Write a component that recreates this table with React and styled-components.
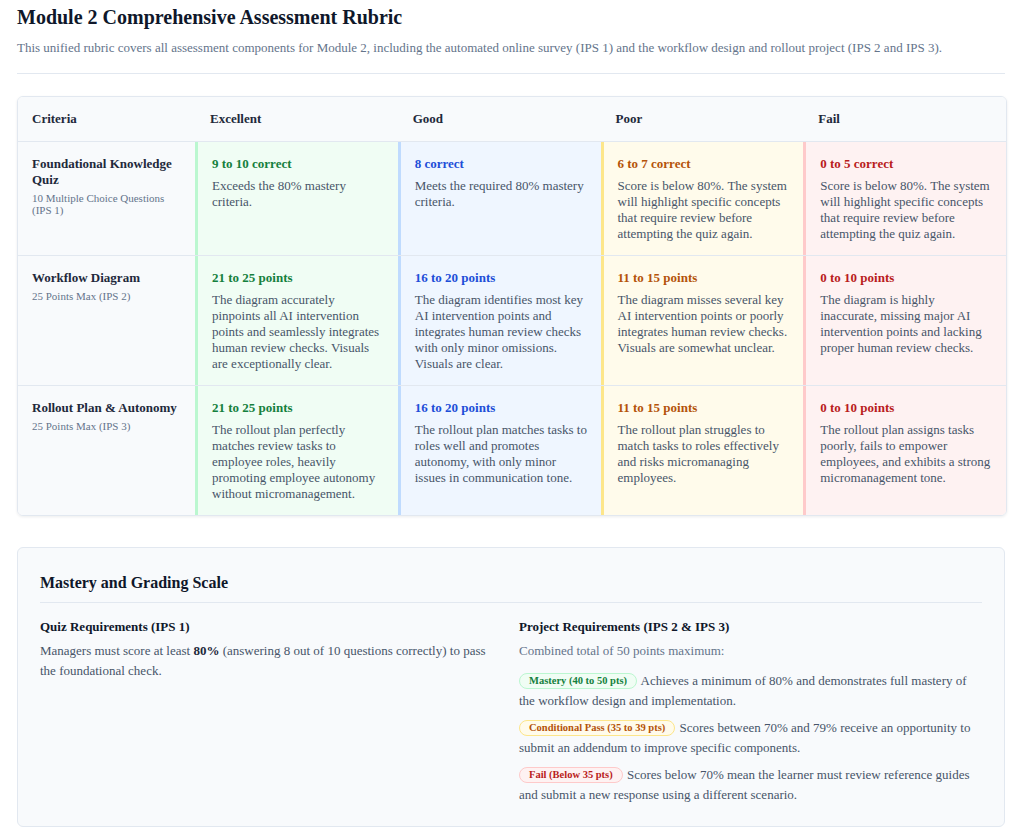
import React from "react";
import styled, { createGlobalStyle } from "styled-components";

const GlobalStyle = createGlobalStyle`
  body {
    margin: 0;
    background: #ffffff;
    font-family: "Liberation Serif", "Times New Roman", serif;
    color: #1e293b;
  }
`;

const tones = {
  green: { bg: "#f0fdf4", border: "#bbf7d0", text: "#15803d" },
  blue: { bg: "#eff6ff", border: "#bfdbfe", text: "#1d4ed8" },
  amber: { bg: "#fffbeb", border: "#fde68a", text: "#b45309" },
  red: { bg: "#fef2f2", border: "#fecaca", text: "#b91c1c" },
};

const Page = styled.div`
  padding: 4px 17px 14px;
`;

const Title = styled.h1`
  margin: 0;
  font-size: 20px;
  line-height: 26px;
  font-weight: 700;
  color: #0f172a;
`;

const Intro = styled.p`
  margin: 9px 2px 0 0;
  font-size: 13px;
  line-height: 18px;
  color: #64748b;
  padding-bottom: 16px;
  border-bottom: 1px solid #e2e8f0;
`;

const TableCard = styled.div`
  margin-top: 22px;
  border: 1px solid #e2e8f0;
  border-radius: 6px;
  overflow: hidden;
  box-shadow: 0 1px 3px rgba(15, 23, 42, 0.08);
`;

const Row = styled.div`
  display: grid;
  grid-template-columns: 177px repeat(4, 1fr);
  border-top: ${({ $head }) => ($head ? "none" : "1px solid #e2e8f0")};
  background: ${({ $head }) => ($head ? "#f8fafc" : "transparent")};
`;

const HeadCell = styled.div`
  padding: 14px 14px 14px 15px;
  font-size: 13px;
  line-height: 16px;
  font-weight: 700;
  color: #1e293b;
  &:first-child {
    padding-left: 14px;
  }
`;

const CriteriaCell = styled.div`
  background: #f8fafc;
  padding: 14px 14px 13px 14px;
`;

const CriteriaName = styled.div`
  font-size: 13px;
  line-height: 16px;
  font-weight: 700;
  color: #1e293b;
`;

const CriteriaNote = styled.div`
  margin-top: 4px;
  font-size: 11px;
  line-height: 12px;
  color: #64748b;
`;

const ScoreCell = styled.div`
  background: ${({ $tone }) => tones[$tone].bg};
  border-left: 3px solid ${({ $tone }) => tones[$tone].border};
  padding: 14px 12px 13px 14px;
`;

const ScoreLabel = styled.div`
  font-size: 13px;
  line-height: 16px;
  font-weight: 700;
  color: ${({ $tone }) => tones[$tone].text};
`;

const ScoreText = styled.div`
  margin-top: 6px;
  font-size: 13px;
  line-height: 16px;
  color: #475569;
`;

const ScaleCard = styled.div`
  margin-top: 31px;
  margin-right: 2px;
  background: #f8fafc;
  border: 1px solid #e2e8f0;
  border-radius: 6px;
  padding: 25px 22px 21px;
`;

const ScaleTitle = styled.h2`
  margin: 0;
  font-size: 16px;
  line-height: 20px;
  font-weight: 700;
  color: #0f172a;
  padding-bottom: 9px;
  border-bottom: 1px solid #e2e8f0;
`;

const Columns = styled.div`
  display: grid;
  grid-template-columns: 1fr 1fr;
  gap: 16px;
  margin-top: 16px;
`;

const ColHead = styled.h3`
  margin: 0;
  font-size: 13px;
  line-height: 16px;
  font-weight: 700;
  color: #0f172a;
`;

const Para = styled.p`
  margin: 6px 0 0;
  font-size: 13px;
  line-height: 20px;
  color: ${({ $muted }) => ($muted ? "#64748b" : "#475569")};
  b {
    color: #1e293b;
  }
`;

const Item = styled.p`
  margin: ${({ $first }) => ($first ? "10px" : "7px")} 0 0;
  font-size: 13px;
  line-height: 20px;
  color: #475569;
`;

const Badge = styled.span`
  display: inline-block;
  margin-right: 1px;
  padding: 1px 9px;
  border-radius: 999px;
  font-size: 10.5px;
  line-height: 12px;
  font-weight: 700;
  background: ${({ $tone }) => tones[$tone].bg};
  border: 1px solid ${({ $tone }) => tones[$tone].border};
  color: ${({ $tone }) => tones[$tone].text};
  vertical-align: 1px;
`;

const levels = ["green", "blue", "amber", "red"];

const rubric = [
  {
    name: "Foundational Knowledge Quiz",
    note: "10 Multiple Choice Questions (IPS 1)",
    cells: [
      ["9 to 10 correct", "Exceeds the 80% mastery criteria."],
      ["8 correct", "Meets the required 80% mastery criteria."],
      [
        "6 to 7 correct",
        "Score is below 80%. The system will highlight specific concepts that require review before attempting the quiz again.",
      ],
      [
        "0 to 5 correct",
        "Score is below 80%. The system will highlight specific concepts that require review before attempting the quiz again.",
      ],
    ],
  },
  {
    name: "Workflow Diagram",
    note: "25 Points Max (IPS 2)",
    cells: [
      [
        "21 to 25 points",
        "The diagram accurately pinpoints all AI intervention points and seamlessly integrates human review checks. Visuals are exceptionally clear.",
      ],
      [
        "16 to 20 points",
        "The diagram identifies most key AI intervention points and integrates human review checks with only minor omissions. Visuals are clear.",
      ],
      [
        "11 to 15 points",
        "The diagram misses several key AI intervention points or poorly integrates human review checks. Visuals are somewhat unclear.",
      ],
      [
        "0 to 10 points",
        "The diagram is highly inaccurate, missing major AI intervention points and lacking proper human review checks.",
      ],
    ],
  },
  {
    name: "Rollout Plan & Autonomy",
    note: "25 Points Max (IPS 3)",
    cells: [
      [
        "21 to 25 points",
        "The rollout plan perfectly matches review tasks to employee roles, heavily promoting employee autonomy without micromanagement.",
      ],
      [
        "16 to 20 points",
        "The rollout plan matches tasks to roles well and promotes autonomy, with only minor issues in communication tone.",
      ],
      [
        "11 to 15 points",
        "The rollout plan struggles to match tasks to roles effectively and risks micromanaging employees.",
      ],
      [
        "0 to 10 points",
        "The rollout plan assigns tasks poorly, fails to empower employees, and exhibits a strong micromanagement tone.",
      ],
    ],
  },
];

const grades = [
  {
    tone: "green",
    label: "Mastery (40 to 50 pts)",
    text: "Achieves a minimum of 80% and demonstrates full mastery of the workflow design and implementation.",
  },
  {
    tone: "amber",
    label: "Conditional Pass (35 to 39 pts)",
    text: "Scores between 70% and 79% receive an opportunity to submit an addendum to improve specific components.",
  },
  {
    tone: "red",
    label: "Fail (Below 35 pts)",
    text: "Scores below 70% mean the learner must review reference guides and submit a new response using a different scenario.",
  },
];

const App = () => {
  return (
    <>
      <GlobalStyle />
      <Page>
        <Title>Module 2 Comprehensive Assessment Rubric</Title>
        <Intro>
          This unified rubric covers all assessment components for Module 2,
          including the automated online survey (IPS 1) and the workflow design
          and rollout project (IPS 2 and IPS 3).
        </Intro>

        <TableCard>
          <Row $head>
            {["Criteria", "Excellent", "Good", "Poor", "Fail"].map((h) => (
              <HeadCell key={h}>{h}</HeadCell>
            ))}
          </Row>
          {rubric.map((row) => (
            <Row key={row.name}>
              <CriteriaCell>
                <CriteriaName>{row.name}</CriteriaName>
                <CriteriaNote>{row.note}</CriteriaNote>
              </CriteriaCell>
              {row.cells.map(([label, text], i) => (
                <ScoreCell key={i} $tone={levels[i]}>
                  <ScoreLabel $tone={levels[i]}>{label}</ScoreLabel>
                  <ScoreText>{text}</ScoreText>
                </ScoreCell>
              ))}
            </Row>
          ))}
        </TableCard>

        <ScaleCard>
          <ScaleTitle>Mastery and Grading Scale</ScaleTitle>
          <Columns>
            <div>
              <ColHead>Quiz Requirements (IPS 1)</ColHead>
              <Para>
                Managers must score at least <b>80%</b> (answering 8 out of 10
                questions correctly) to pass the foundational check.
              </Para>
            </div>
            <div>
              <ColHead>Project Requirements (IPS 2 &amp; IPS 3)</ColHead>
              <Para $muted>Combined total of 50 points maximum:</Para>
              {grades.map((g, i) => (
                <Item key={g.tone} $first={i === 0}>
                  <Badge $tone={g.tone}>{g.label}</Badge> {g.text}
                </Item>
              ))}
            </div>
          </Columns>
        </ScaleCard>
      </Page>
    </>
  );
};

export default App;
